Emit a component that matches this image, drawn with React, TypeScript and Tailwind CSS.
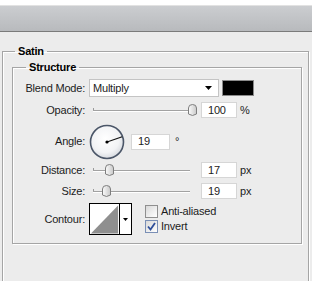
import React from "react";

const Thumb = ({ left }: { left: number }) => (
  <svg
    className="absolute top-[2px]"
    style={{ left }}
    width="9"
    height="12"
    viewBox="0 0 9 12"
  >
    <defs>
      <linearGradient id="tg" x1="0" y1="0" x2="1" y2="0">
        <stop offset="0" stopColor="#fbfbfb" />
        <stop offset="1" stopColor="#c9c9c9" />
      </linearGradient>
    </defs>
    <path
      d="M0.5 4 Q0.5 0.5 4.5 0.5 Q8.5 0.5 8.5 4 L8.5 10 L4.5 11.5 L0.5 10 Z"
      fill="url(#tg)"
      stroke="#7e7e7e"
    />
  </svg>
);

const Slider = ({ thumb }: { thumb: number }) => (
  <div className="relative w-[109px] h-[16px]">
    <div className="absolute left-[4px] top-[6px] w-px h-[4px] bg-[#9a9a9a]" />
    <div className="absolute left-[4px] top-[8px] w-[97px] h-px bg-[#a2a2a2] shadow-[0_1px_0_#ffffff]" />
    <Thumb left={thumb} />
  </div>
);

const NumBox = ({ value, w = "w-[36px]" }: { value: string; w?: string }) => (
  <div className={`${w} h-[16px] bg-white border border-[#d6d6d6] pl-[6px] flex items-center leading-none`}>
    {value}
  </div>
);

const Label = ({ children }: { children: React.ReactNode }) => (
  <div className="w-[73px] text-right pr-px">{children}</div>
);

const CheckBox = ({ checked }: { checked?: boolean }) => (
  <div
    className={`w-[13px] h-[13px] border flex items-center justify-center bg-gradient-to-br from-[#d9d9d9] to-white ${
      checked ? "border-[#7a8fb5]" : "border-[#8f8f8f]"
    }`}
  >
    {checked && (
      <svg width="9" height="9" viewBox="0 0 9 9">
        <path d="M1 4.5 L3.5 7.5 L8 1" fill="none" stroke="#2f4f9a" strokeWidth="1.8" />
      </svg>
    )}
  </div>
);

export default function App() {
  return (
    <div className="w-[312px] h-[281px] overflow-hidden bg-[#ececec] font-['Liberation_Sans',Arial,sans-serif] text-[11px] leading-[13px] tracking-[-0.2px] text-[#1c1c1c]">
      <div className="h-[6px] bg-white border-b border-[#e2e2e2]" />
      <div className="h-[26px] bg-gradient-to-b from-[#cbcdd0] to-[#b8babd] border-b border-[#7b7b7b]" />

      <div className="pl-[2px] pt-[13px]">
        <fieldset className="w-[307px] h-[300px] border border-[#a5a5a5] shadow-[inset_1px_1px_0_#ffffff,1px_1px_0_#ffffff] pl-[9px] pr-[6px]">
          <legend className="ml-[3px] px-[3px] font-bold text-black">Satin</legend>

          <fieldset className="mt-[3px] w-[290px] border border-[#a5a5a5] shadow-[inset_1px_1px_0_#ffffff,1px_1px_0_#ffffff] pb-[8px]">
            <legend className="ml-[13px] px-[3px] font-bold text-black">Structure</legend>

            {/* Blend mode */}
            <div className="mt-[5px] h-[18px] flex items-center gap-[3px]">
              <Label>Blend Mode:</Label>
              <div className="w-[130px] h-[18px] bg-white border border-[#c4c4c4] flex items-center justify-between pl-[3px] pr-[6px]">
                <span>Multiply</span>
                <svg width="7" height="4" viewBox="0 0 7 4">
                  <path d="M0 0 H7 L3.5 4 Z" fill="#000" />
                </svg>
              </div>
              <div className="w-[32px] h-[16px] bg-black border border-[#8a8a8a]" />
            </div>

            {/* Opacity */}
            <div className="mt-[5px] h-[16px] flex items-center gap-[3px]">
              <Label>Opacity:</Label>
              <Slider thumb={99} />
              <NumBox value="100" />
              <span>%</span>
            </div>

            {/* Angle */}
            <div className="mt-[6px] h-[35px] flex items-center gap-[3px]">
              <Label>Angle:</Label>
              <svg width="36" height="36" viewBox="0 0 36 36">
                <defs>
                  <radialGradient id="dial" cx="0.45" cy="0.4" r="0.6">
                    <stop offset="0" stopColor="#ffffff" />
                    <stop offset="0.7" stopColor="#f2f3f5" />
                    <stop offset="1" stopColor="#d8dbe0" />
                  </radialGradient>
                </defs>
                <circle cx="18" cy="18" r="16.5" fill="url(#dial)" stroke="#4b5668" strokeWidth="1.6" />
                <line x1="18" y1="18" x2="33.2" y2="12.8" stroke="#111" strokeWidth="1.1" />
                <circle cx="18" cy="18" r="1.6" fill="#000" />
              </svg>
              <div className="ml-[3px] flex items-center gap-[5px]">
                <NumBox value="19" w="w-[39px]" />
                <span>°</span>
              </div>
            </div>

            {/* Distance */}
            <div className="mt-[3px] h-[16px] flex items-center gap-[3px]">
              <Label>Distance:</Label>
              <Slider thumb={16} />
              <NumBox value="17" />
              <span>px</span>
            </div>

            {/* Size */}
            <div className="mt-[5px] h-[16px] flex items-center gap-[3px]">
              <Label>Size:</Label>
              <Slider thumb={13} />
              <NumBox value="19" />
              <span>px</span>
            </div>

            {/* Contour */}
            <div className="mt-[4px] h-[32px] flex items-center gap-[3px]">
              <Label>Contour:</Label>
              <div className="w-[43px] h-[32px] border border-black bg-white flex">
                <svg width="30" height="30" viewBox="0 0 30 30" className="border-r border-black">
                  <path d="M1 30 L29 1 L29 30 Z" fill="#8f8f8f" />
                </svg>
                <div className="flex-1 flex items-center justify-center">
                  <svg width="5" height="3" viewBox="0 0 5 3">
                    <path d="M0 0 H5 L2.5 3 Z" fill="#000" />
                  </svg>
                </div>
              </div>
              <div className="ml-[10px] flex flex-col gap-[2px]">
                <div className="flex items-center gap-[3px]">
                  <CheckBox />
                  <span>Anti-aliased</span>
                </div>
                <div className="flex items-center gap-[3px]">
                  <CheckBox checked />
                  <span>Invert</span>
                </div>
              </div>
            </div>
          </fieldset>
        </fieldset>
      </div>
    </div>
  );
}
